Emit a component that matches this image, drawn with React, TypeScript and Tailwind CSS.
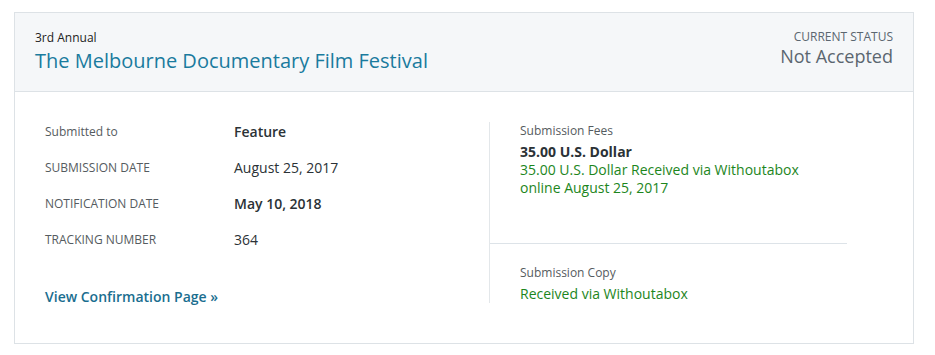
import React from "react";

const font = { fontFamily: '"Open Sans", "Noto Sans", sans-serif' };

function Row({ label, value, bold, upper = true, h = "h-[36px]" }: { label: string; value: string; bold?: boolean; upper?: boolean; h?: string }) {
  return (
    <div className={`flex ${h} items-center`}>
      <div className={`w-[189px] text-[12px] leading-[18px] text-[#555b60] ${upper ? "uppercase" : ""}`}>{label}</div>
      <div className={`text-[14px] leading-[20px] text-[#2b3236] ${bold ? "font-semibold" : ""}`}>{value}</div>
    </div>
  );
}

export default function App() {
  return (
    <div className="bg-white w-[935px] h-[355px] pt-[12px] pl-[14px]" style={font}>
      <div className="w-[900px] h-[332px] border border-[#dde2e6] bg-white">
        <div className="flex justify-between bg-[#f5f7f9] border-b border-[#dde2e6] pl-[20px] pr-[20px] pt-[16px] h-[79px]">
          <div>
            <div className="text-[12px] leading-[18px] text-[#222]">3rd Annual</div>
            <div className="text-[20px] leading-[28px] text-[#1a7b9e]">The Melbourne Documentary Film Festival</div>
          </div>
          <div className="text-right">
            <div className="text-[12px] leading-[16px] text-[#5b6670] uppercase">Current Status</div>
            <div className="mt-[1px] text-[18px] leading-[20px] text-[#5b6670]">Not Accepted</div>
          </div>
        </div>
        <div className="flex pl-[30px] pt-[21px]">
          <div className="w-[444px]">
            <Row label="Submitted to" value="Feature" bold upper={false} h="h-[37px]" />
            <Row label="Submission Date" value="August 25, 2017" />
            <Row label="Notification Date" value="May 10, 2018" bold />
            <Row label="Tracking Number" value="364" />
            <div className="mt-[30px] text-[14px] leading-[18px] font-semibold text-[#1a6e8f]">View Confirmation Page »</div>
          </div>
          <div className="mt-[9px] w-[358px] border-l border-[#e3e7ea] h-[181px] flex flex-col">
            <div className="h-[123px] border-b border-[#dde3e8] pl-[30px] pt-[0px]">
              <div className="text-[12px] leading-[18px] text-[#555b60]">Submission Fees</div>
              <div className="mt-[3px] text-[14px] leading-[18px] font-bold text-[#2b3236]">35.00 U.S. Dollar</div>
              <div className="text-[14px] leading-[18px] text-[#1d861d]">35.00 U.S. Dollar Received via Withoutabox<br />online August 25, 2017</div>
            </div>
            <div className="pl-[30px] pt-[20px]">
              <div className="text-[12px] leading-[18px] text-[#555b60]">Submission Copy</div>
              <div className="mt-[3px] text-[14px] leading-[18px] text-[#1d861d]">Received via Withoutabox</div>
            </div>
          </div>
        </div>
      </div>
    </div>
  );
}
